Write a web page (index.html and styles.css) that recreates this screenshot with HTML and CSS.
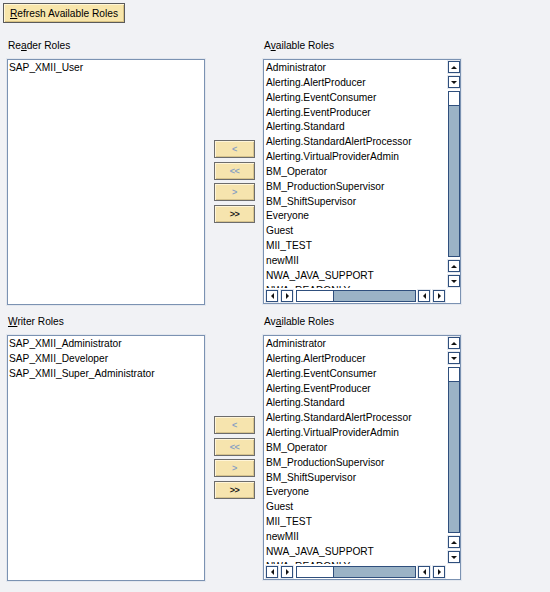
FILE: index.html
```html
<!DOCTYPE html>
<html>
<head>
<meta charset="utf-8">
<link rel="stylesheet" href="styles.css">
</head>
<body>
<div class="page">
  <button class="refresh"><u>R</u>efresh Available Roles</button>

  <section class="roles first">
    <div class="label">Re<u>a</u>der Roles</div>
    <div></div>
    <div class="label">A<u>v</u>ailable Roles</div>
    <div class="listbox assigned">
      <div class="item">SAP_XMII_User</div>
    </div>
    <div class="movers">
      <button class="mv dim">&lt;</button>
      <button class="mv dim">&lt;&lt;</button>
      <button class="mv dim">&gt;</button>
      <button class="mv on">&gt;&gt;</button>
    </div>
    <div class="listbox avail">
      <div class="items">
        <div class="item">Administrator</div>
        <div class="item">Alerting.AlertProducer</div>
        <div class="item">Alerting.EventConsumer</div>
        <div class="item">Alerting.EventProducer</div>
        <div class="item">Alerting.Standard</div>
        <div class="item">Alerting.StandardAlertProcessor</div>
        <div class="item">Alerting.VirtualProviderAdmin</div>
        <div class="item">BM_Operator</div>
        <div class="item">BM_ProductionSupervisor</div>
        <div class="item">BM_ShiftSupervisor</div>
        <div class="item">Everyone</div>
        <div class="item">Guest</div>
        <div class="item">MII_TEST</div>
        <div class="item">newMII</div>
        <div class="item">NWA_JAVA_SUPPORT</div>
        <div class="item">NWA_READONLY</div>
      </div>
      <div class="vscroll">
        <span class="sb"><i class="tri up"></i></span>
        <span class="sb"><i class="tri down"></i></span>
        <span class="track v"><span class="thumb"></span></span>
        <span class="sb"><i class="tri up"></i></span>
        <span class="sb"><i class="tri down"></i></span>
      </div>
      <div class="hscroll">
        <span class="sb"><i class="tri left"></i></span>
        <span class="sb"><i class="tri right"></i></span>
        <span class="track h"><span class="thumb"></span></span>
        <span class="sb g2"><i class="tri left"></i></span>
        <span class="sb"><i class="tri right"></i></span>
      </div>
      <div class="corner"></div>
    </div>
  </section>

  <section class="roles second">
    <div class="label"><u>W</u>riter Roles</div>
    <div></div>
    <div class="label">Av<u>a</u>ilable Roles</div>
    <div class="listbox assigned">
      <div class="item">SAP_XMII_Administrator</div>
      <div class="item">SAP_XMII_Developer</div>
      <div class="item">SAP_XMII_Super_Administrator</div>
    </div>
    <div class="movers">
      <button class="mv dim">&lt;</button>
      <button class="mv dim">&lt;&lt;</button>
      <button class="mv dim">&gt;</button>
      <button class="mv on">&gt;&gt;</button>
    </div>
    <div class="listbox avail">
      <div class="items">
        <div class="item">Administrator</div>
        <div class="item">Alerting.AlertProducer</div>
        <div class="item">Alerting.EventConsumer</div>
        <div class="item">Alerting.EventProducer</div>
        <div class="item">Alerting.Standard</div>
        <div class="item">Alerting.StandardAlertProcessor</div>
        <div class="item">Alerting.VirtualProviderAdmin</div>
        <div class="item">BM_Operator</div>
        <div class="item">BM_ProductionSupervisor</div>
        <div class="item">BM_ShiftSupervisor</div>
        <div class="item">Everyone</div>
        <div class="item">Guest</div>
        <div class="item">MII_TEST</div>
        <div class="item">newMII</div>
        <div class="item">NWA_JAVA_SUPPORT</div>
        <div class="item">NWA_READONLY</div>
      </div>
      <div class="vscroll">
        <span class="sb"><i class="tri up"></i></span>
        <span class="sb"><i class="tri down"></i></span>
        <span class="track v"><span class="thumb"></span></span>
        <span class="sb"><i class="tri up"></i></span>
        <span class="sb"><i class="tri down"></i></span>
      </div>
      <div class="hscroll">
        <span class="sb"><i class="tri left"></i></span>
        <span class="sb"><i class="tri right"></i></span>
        <span class="track h"><span class="thumb"></span></span>
        <span class="sb g2"><i class="tri left"></i></span>
        <span class="sb"><i class="tri right"></i></span>
      </div>
      <div class="corner"></div>
    </div>
  </section>
</div>
</body>
</html>
```

FILE: styles.css
```css
html, body {
  margin: 0;
  padding: 0;
  background: #f1f2f5;
}
body {
  font-family: "Liberation Sans", Arial, sans-serif;
  font-size: 10.2px;
  color: #000;
}
.page {
  display: flex;
  flex-direction: column;
  align-items: flex-start;
  height: 592px;
  overflow: hidden;
}
.refresh {
  margin: 3px 0 0 3px;
  width: 122px;
  height: 20px;
  padding: 1px 0 0 6px;
  text-align: left;
  font: inherit;
  color: #000;
  background: #f8e6ab;
  border: 1px solid #5a5a5a;
  box-shadow: inset 1px 1px 0 #fff6d6, inset -1px -1px 0 #d9c384;
}
u {
  text-decoration: underline;
  text-underline-offset: 1px;
}
.roles {
  display: grid;
  grid-template-columns: 198px 58px 198px;
  grid-template-rows: auto 246px;
  padding-left: 7px;
}
.roles.first { margin-top: 16px; }
.roles.second { margin-top: 10px; }
.label {
  line-height: 12px;
  padding-top: 1px;
  margin: 0 0 7px 1px;
}
.listbox {
  box-sizing: border-box;
  background: #fff;
  border: 1px solid #7b92b2;
  box-shadow: 0 0 0 1px #e3e7ee;
  overflow: hidden;
}
.listbox.assigned {
  padding: 1px 0 0 1px;
}
.item {
  line-height: 14.85px;
  height: 14.85px;
  white-space: nowrap;
}
.movers {
  display: flex;
  flex-direction: column;
  gap: 3.5px;
  padding: 81px 0 0 9px;
}
.mv {
  width: 41px;
  height: 18px;
  padding: 0;
  font-family: "Liberation Sans", Arial, sans-serif;
  font-size: 9px;
  font-weight: bold;
  letter-spacing: -0.5px;
  background: #f6e4ae;
  border: 1px solid #6c6c6c;
  box-shadow: inset 1px 1px 0 #fff5d8, inset -1px -1px 0 #d7c48e;
}
.mv.dim { color: #8aa1c2; }
.mv.on { color: #1a1a1a; }
.listbox.avail {
  height: 245px;
  display: grid;
  grid-template-columns: 182px 14px;
  grid-template-rows: 1fr 15px;
}
.items {
  overflow: hidden;
  padding: 1px 0 0 2px;
}
.vscroll {
  display: flex;
  flex-direction: column;
  align-items: flex-end;
  gap: 3px;
  padding: 1px 0 1px 0;
  overflow: hidden;
}
.hscroll {
  display: flex;
  align-items: center;
  gap: 3px;
  padding: 0 1px 0 2px;
}
.hscroll .g2 { margin-left: -1px; }
.sb {
  box-sizing: border-box;
  flex: none;
  width: 12px;
  height: 12px;
  background: #fff;
  border: 1px solid #2f4f7d;
  box-shadow: 0 0 0 1px #e6eaf0;
  display: flex;
  align-items: center;
  justify-content: center;
}
.tri {
  width: 0;
  height: 0;
}
.tri.up {
  border-left: 3px solid transparent;
  border-right: 3px solid transparent;
  border-bottom: 3px solid #111;
}
.tri.down {
  border-left: 3px solid transparent;
  border-right: 3px solid transparent;
  border-top: 3px solid #111;
}
.tri.left {
  border-top: 3px solid transparent;
  border-bottom: 3px solid transparent;
  border-right: 3px solid #111;
}
.tri.right {
  border-top: 3px solid transparent;
  border-bottom: 3px solid transparent;
  border-left: 3px solid #111;
}
.track {
  box-sizing: border-box;
  display: flex;
  background: #9bb3c6;
  border: 1px solid #2f4f7d;
}
.track.v {
  width: 12px;
  flex: 1;
  flex-direction: column;
}
.track.h {
  height: 12px;
  flex: 1;
}
.track.v .thumb {
  height: 13px;
  background: #fff;
  border-bottom: 1px solid #2f4f7d;
}
.track.h .thumb {
  width: 36px;
  background: #fff;
  border-right: 1px solid #2f4f7d;
}
.corner {
  background: #fff;
}
```
